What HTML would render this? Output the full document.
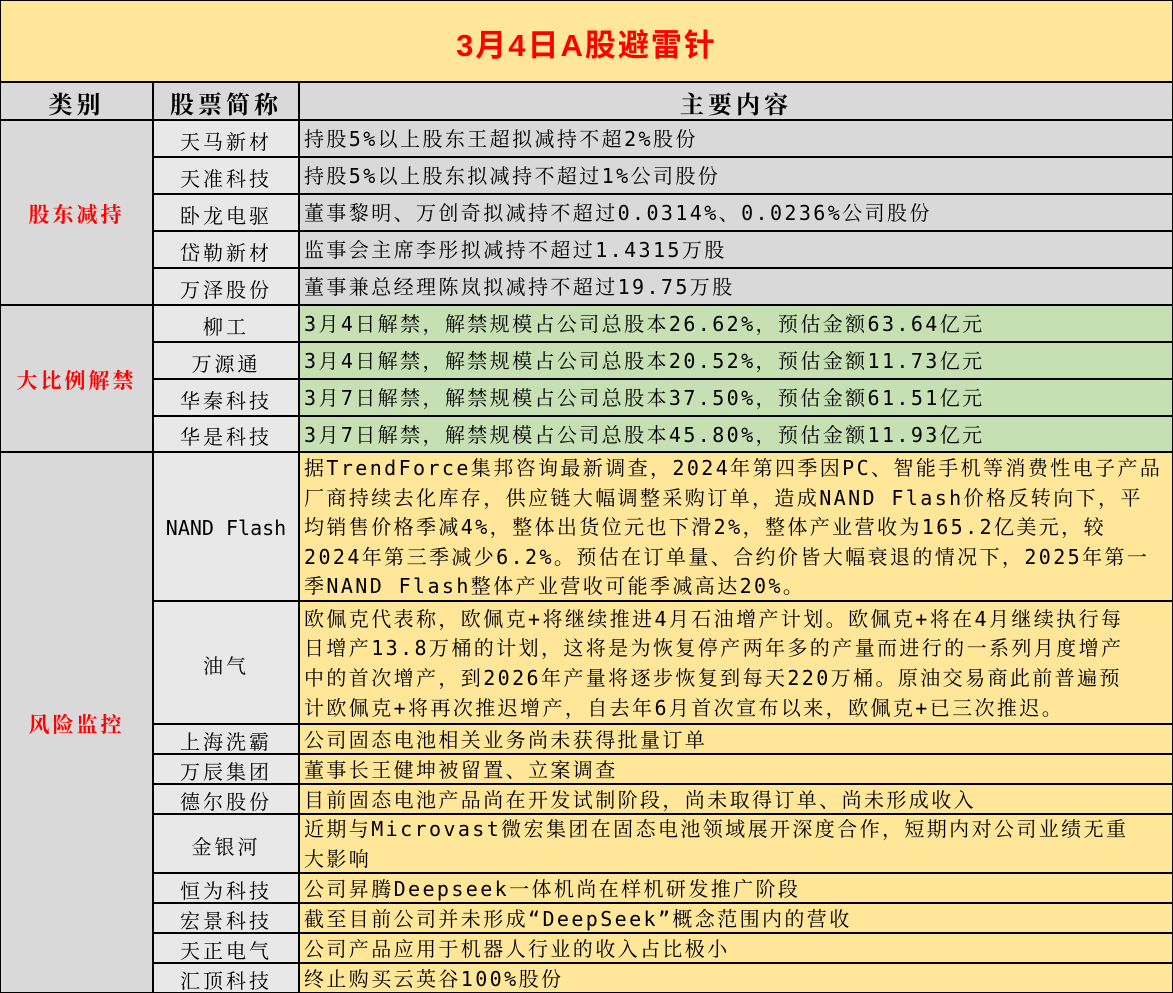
<!DOCTYPE html>
<html><head><meta charset="utf-8"><style>
html,body{margin:0;padding:0;}
body{width:1173px;height:993px;overflow:hidden;background:#000;position:relative;font-family:"DejaVu Sans Mono","Noto Serif CJK SC","Noto Sans CJK SC",monospace;}
.b{position:absolute;display:flex;align-items:center;white-space:nowrap;overflow:hidden;color:#000;box-sizing:border-box;padding-top:3px;}
.t{background:#FFE699;justify-content:center;color:#f00;font-size:31px;font-weight:bold;letter-spacing:2px;font-family:"Liberation Sans","Noto Sans CJK SC",sans-serif;}
.h{background:#D9D9D9;justify-content:center;font-size:24px;font-weight:bold;letter-spacing:4px;}
.cat{background:#D9D9D9;justify-content:center;color:#f00;font-size:21px;font-weight:bold;letter-spacing:3px;}
.n{background:#E8E8E8;justify-content:center;font-size:20px;letter-spacing:3px;}
.c{font-size:20px;letter-spacing:2.4px;padding-left:4px;line-height:29.6px;}
.g{background:#D9D9D9}.gr{background:#C6E0B4}.y{background:#FFE699}
</style></head><body>
<div class="b t" style="left:1px;top:1px;width:1171px;height:80px">3月4日A股避雷针</div>
<div class="b h" style="left:1px;top:83px;width:151px;height:36px">类别</div>
<div class="b h" style="left:154px;top:83px;width:144px;height:36px">股票简称</div>
<div class="b h" style="left:300px;top:83px;width:872px;height:36px">主要内容</div>

<div class="b cat" style="left:1px;top:121px;width:151px;height:183px">股东减持</div>
<div class="b cat" style="left:1px;top:306px;width:151px;height:145px">大比例解禁</div>
<div class="b cat" style="left:1px;top:453px;width:151px;height:539px">风险监控</div>

<div class="b n" style="left:154px;top:121px;width:144px;height:35px">天马新材</div>
<div class="b c g" style="left:300px;top:121px;width:872px;height:35px">持股5%以上股东王超拟减持不超2%股份</div>
<div class="b n" style="left:154px;top:158px;width:144px;height:35px">天准科技</div>
<div class="b c g" style="left:300px;top:158px;width:872px;height:35px">持股5%以上股东拟减持不超过1%公司股份</div>
<div class="b n" style="left:154px;top:195px;width:144px;height:35px">卧龙电驱</div>
<div class="b c g" style="left:300px;top:195px;width:872px;height:35px">董事黎明、万创奇拟减持不超过0.0314%、0.0236%公司股份</div>
<div class="b n" style="left:154px;top:232px;width:144px;height:35px">岱勒新材</div>
<div class="b c g" style="left:300px;top:232px;width:872px;height:35px">监事会主席李彤拟减持不超过1.4315万股</div>
<div class="b n" style="left:154px;top:269px;width:144px;height:35px">万泽股份</div>
<div class="b c g" style="left:300px;top:269px;width:872px;height:35px">董事兼总经理陈岚拟减持不超过19.75万股</div>

<div class="b n" style="left:154px;top:306px;width:144px;height:35px">柳工</div>
<div class="b c gr" style="left:300px;top:306px;width:872px;height:35px">3月4日解禁，解禁规模占公司总股本26.62%，预估金额63.64亿元</div>
<div class="b n" style="left:154px;top:343px;width:144px;height:35px">万源通</div>
<div class="b c gr" style="left:300px;top:343px;width:872px;height:35px">3月4日解禁，解禁规模占公司总股本20.52%，预估金额11.73亿元</div>
<div class="b n" style="left:154px;top:380px;width:144px;height:35px">华秦科技</div>
<div class="b c gr" style="left:300px;top:380px;width:872px;height:35px">3月7日解禁，解禁规模占公司总股本37.50%，预估金额61.51亿元</div>
<div class="b n" style="left:154px;top:417px;width:144px;height:34px">华是科技</div>
<div class="b c gr" style="left:300px;top:417px;width:872px;height:34px">3月7日解禁，解禁规模占公司总股本45.80%，预估金额11.93亿元</div>

<div class="b n" style="left:154px;top:453px;width:144px;height:147px;letter-spacing:0">NAND Flash</div>
<div class="b c y" style="left:300px;top:453px;width:872px;height:147px">据TrendForce集邦咨询最新调查，2024年第四季因PC、智能手机等消费性电子产品<br>厂商持续去化库存，供应链大幅调整采购订单，造成NAND Flash价格反转向下，平<br>均销售价格季减4%，整体出货位元也下滑2%，整体产业营收为165.2亿美元，较<br>2024年第三季减少6.2%。预估在订单量、合约价皆大幅衰退的情况下，2025年第一<br>季NAND Flash整体产业营收可能季减高达20%。</div>
<div class="b n" style="left:154px;top:602px;width:144px;height:121px">油气</div>
<div class="b c y" style="left:300px;top:602px;width:872px;height:121px">欧佩克代表称，欧佩克+将继续推进4月石油增产计划。欧佩克+将在4月继续执行每<br>日增产13.8万桶的计划，这将是为恢复停产两年多的产量而进行的一系列月度增产<br>中的首次增产，到2026年产量将逐步恢复到每天220万桶。原油交易商此前普遍预<br>计欧佩克+将再次推迟增产，自去年6月首次宣布以来，欧佩克+已三次推迟。</div>
<div class="b n" style="left:154px;top:725px;width:144px;height:28px">上海洗霸</div>
<div class="b c y" style="left:300px;top:725px;width:872px;height:28px">公司固态电池相关业务尚未获得批量订单</div>
<div class="b n" style="left:154px;top:755px;width:144px;height:28px">万辰集团</div>
<div class="b c y" style="left:300px;top:755px;width:872px;height:28px">董事长王健坤被留置、立案调查</div>
<div class="b n" style="left:154px;top:785px;width:144px;height:28px">德尔股份</div>
<div class="b c y" style="left:300px;top:785px;width:872px;height:28px">目前固态电池产品尚在开发试制阶段，尚未取得订单、尚未形成收入</div>
<div class="b n" style="left:154px;top:815px;width:144px;height:57px">金银河</div>
<div class="b c y" style="left:300px;top:815px;width:872px;height:57px">近期与Microvast微宏集团在固态电池领域展开深度合作，短期内对公司业绩无重<br>大影响</div>
<div class="b n" style="left:154px;top:874px;width:144px;height:28px">恒为科技</div>
<div class="b c y" style="left:300px;top:874px;width:872px;height:28px">公司昇腾Deepseek一体机尚在样机研发推广阶段</div>
<div class="b n" style="left:154px;top:904px;width:144px;height:28px">宏景科技</div>
<div class="b c y" style="left:300px;top:904px;width:872px;height:28px">截至目前公司并未形成“DeepSeek”概念范围内的营收</div>
<div class="b n" style="left:154px;top:934px;width:144px;height:28px">天正电气</div>
<div class="b c y" style="left:300px;top:934px;width:872px;height:28px">公司产品应用于机器人行业的收入占比极小</div>
<div class="b n" style="left:154px;top:964px;width:144px;height:28px">汇顶科技</div>
<div class="b c y" style="left:300px;top:964px;width:872px;height:28px">终止购买云英谷100%股份</div>
</body></html>
